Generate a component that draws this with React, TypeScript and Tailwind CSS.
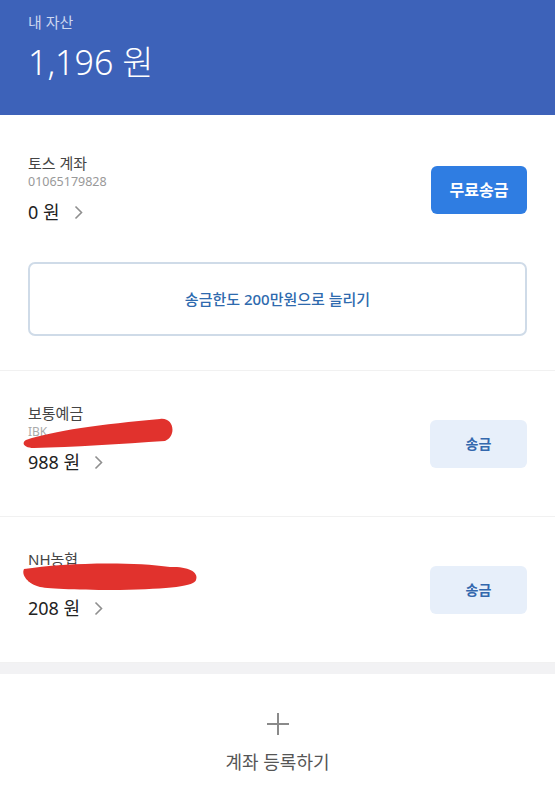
const font = "font-['Noto_Sans','Noto_Sans_CJK_KR',sans-serif]";

function Chevron() {
  return (
    <svg width="9" height="15" viewBox="0 0 9 15" className="ml-[14px]">
      <path d="M1.5 1.5 L7.5 7.5 L1.5 13.5" fill="none" stroke="#8f8f8f" strokeWidth="1.6" />
    </svg>
  );
}

function Scribble({ wide }: { wide?: boolean }) {
  if (wide) {
    return (
      <svg width="180" height="34" viewBox="0 0 180 34" className="absolute left-[-8px] top-[-10px]">
        <path
          d="M4 10 C40 4 110 2 150 8 C170 7 179 14 176 21 C175 27 150 30 100 31 C60 31 30 30 20 28 C8 25 1 16 4 10 Z"
          fill="#e1322d"
        />
      </svg>
    );
  }
  return (
    <svg width="155" height="36" viewBox="0 0 155 36" className="absolute left-[-6px] top-[-9px]">
      <path
        d="M4 26 C30 17 80 10 138 5 C152 3 155 22 143 27 C100 30 50 33 12 34 C2 34 -1 29 4 26 Z"
        fill="#e1322d"
      />
    </svg>
  );
}

function AccountRow({ name, amount, wide }: { name: string; amount: string; wide?: boolean }) {
  return (
    <div className="flex items-center justify-between px-[28px] pt-[32px] pb-[40px] border-b border-[#f1f1f1] last:border-b-0">
      <div className="flex flex-col">
        <p className="text-[15px] leading-[20px] text-[#444]">{name}</p>
        <div className="relative h-[18px]">
          <p className="text-[12px] leading-[18px] text-[#aaa]">IBK</p>
          <Scribble wide={wide} />
        </div>
        <div className="mt-[7px] flex items-center h-[28px]">
          <span className="text-[18px] text-[#222]">{amount}</span>
          <Chevron />
        </div>
      </div>
      <button className="mt-[8px] w-[97px] h-[48px] rounded-[6px] bg-[#e7effa] text-[14px] font-bold text-[#3367ad]">
        송금
      </button>
    </div>
  );
}

export default function App() {
  return (
    <div className={`${font} w-[555px] min-h-[795px] bg-white`}>
      <header className="h-[115px] bg-[#3d62b9] px-[28px] pt-[11px]">
        <p className="text-[15px] leading-[22px] text-[#cdd8f0]">내 자산</p>
        <p className="mt-[8px] text-[34px] leading-[42px] font-light text-white">1,196 원</p>
      </header>

      <section className="px-[28px] pt-[38px] pb-[34px] border-b border-[#f1f1f1]">
        <div className="flex items-center justify-between">
          <div className="flex flex-col">
            <p className="text-[15px] leading-[20px] text-[#444]">토스 계좌</p>
            <p className="text-[12.5px] leading-[18px] text-[#999]">01065179828</p>
            <div className="mt-[7px] flex items-center h-[28px]">
              <span className="text-[18px] text-[#222]">0 원</span>
              <Chevron />
            </div>
          </div>
          <button className="w-[96px] h-[48px] rounded-[6px] bg-[#2f7de2] text-[16px] font-bold text-white">
            무료송금
          </button>
        </div>
        <div className="mt-[36px] h-[74px] rounded-[7px] border-2 border-[#cfdbe8] flex items-center justify-center">
          <span className="text-[15px] font-medium text-[#2e6aae]">송금한도 200만원으로 늘리기</span>
        </div>
      </section>

      <AccountRow name="보통예금" amount="988 원" />
      <AccountRow name="NH농협" amount="208 원" wide />

      <div className="h-[11px] bg-[#f2f2f4]" />

      <div className="flex flex-col items-center pt-[38px] pb-[20px]">
        <svg width="24" height="24" viewBox="0 0 24 24">
          <path d="M12 1 V23 M1 12 H23" stroke="#8a8a8a" strokeWidth="2" />
        </svg>
        <p className="mt-[13px] text-[18px] text-[#555]">계좌 등록하기</p>
      </div>
    </div>
  );
}
